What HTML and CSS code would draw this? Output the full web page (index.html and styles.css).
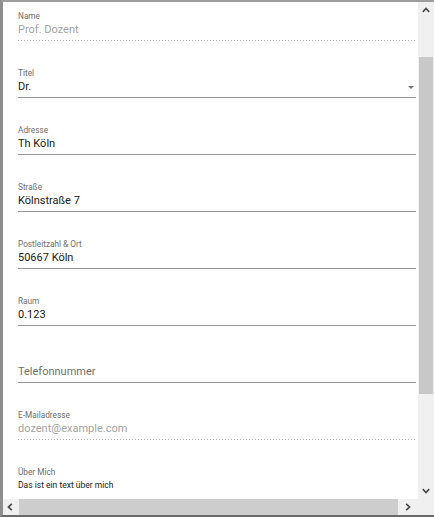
FILE: index.html
```html
<!DOCTYPE html>
<html lang="de">
<head>
<meta charset="utf-8">
<title>Dozent</title>
<link rel="stylesheet" href="styles.css">
</head>
<body>
<div class="frame">
  <div class="main">
    <div class="content">
      <div class="field first disabled">
        <div class="label">Name</div>
        <div class="value">Prof. Dozent</div>
        <div class="line"></div>
      </div>
      <div class="field">
        <div class="label">Titel</div>
        <div class="value-row">
          <div class="value">Dr.</div>
          <span class="caret"></span>
        </div>
        <div class="line"></div>
      </div>
      <div class="field">
        <div class="label">Adresse</div>
        <div class="value">Th Köln</div>
        <div class="line"></div>
      </div>
      <div class="field">
        <div class="label">Straße</div>
        <div class="value">Kölnstraße 7</div>
        <div class="line"></div>
      </div>
      <div class="field">
        <div class="label">Postleitzahl &amp; Ort</div>
        <div class="value">50667 Köln</div>
        <div class="line"></div>
      </div>
      <div class="field">
        <div class="label">Raum</div>
        <div class="value">0.123</div>
        <div class="line"></div>
      </div>
      <div class="field">
        <div class="label"></div>
        <div class="value placeholder">Telefonnummer</div>
        <div class="line"></div>
      </div>
      <div class="field disabled">
        <div class="label">E-Mailadresse</div>
        <div class="value">dozent@example.com</div>
        <div class="line"></div>
      </div>
      <div class="field area">
        <div class="label">Über Mich</div>
        <div class="text">Das ist ein text über mich</div>
      </div>
    </div>
    <div class="hbar">
      <div class="hbtn left">
        <svg width="6" height="8" viewBox="0 0 6 8"><path d="M4.8 0.8 L1.5 4 L4.8 7.2" fill="none" stroke="#4a4a4a" stroke-width="1.7"/></svg>
      </div>
      <div class="hthumb"></div>
      <div class="hbtn right">
        <svg width="6" height="8" viewBox="0 0 6 8"><path d="M1.2 0.8 L4.5 4 L1.2 7.2" fill="none" stroke="#4a4a4a" stroke-width="1.7"/></svg>
      </div>
    </div>
  </div>
  <div class="vbar">
    <div class="vbtn">
      <svg width="8" height="6" viewBox="0 0 8 6"><path d="M0.8 4.8 L4 1.5 L7.2 4.8" fill="none" stroke="#4a4a4a" stroke-width="1.7"/></svg>
    </div>
    <div class="vtrack"><div class="vthumb"></div></div>
    <div class="vbtn">
      <svg width="8" height="6" viewBox="0 0 8 6"><path d="M0.8 1.2 L4 4.5 L7.2 1.2" fill="none" stroke="#4a4a4a" stroke-width="1.7"/></svg>
    </div>
    <div class="corner"></div>
  </div>
</div>
</body>
</html>
```
FILE: styles.css
```css
html, body {
  margin: 0;
  padding: 0;
  background: #ffffff;
}
body {
  width: 434px;
  height: 517px;
  overflow: hidden;
  font-family: Roboto, "Noto Sans", Arial, sans-serif;
}
.frame {
  display: flex;
  height: 517px;
  box-sizing: border-box;
  border-top: 2px solid #9d9d9d;
  border-left: 3px solid #8e8e8e;
  border-bottom: 2px solid #6a6a6a;
  background: #ffffff;
}
.main {
  width: 415px;
  display: flex;
  flex-direction: column;
}
.content {
  height: 497px;
  overflow: hidden;
  padding: 0 2px 0 15px;
}
.field {
  padding-top: 27px;
}
.field.first {
  padding-top: 9px;
}
.label {
  height: 10px;
  font-size: 8.25px;
  line-height: 10px;
  color: #6e6e6e;
  margin-bottom: 2px;
  white-space: nowrap;
}
.value {
  font-size: 11px;
  line-height: 14px;
  height: 14px;
  color: #202020;
  padding-bottom: 3px;
  white-space: nowrap;
}
.value-row {
  display: flex;
  align-items: flex-start;
}
.value-row .value {
  flex: 1;
}
.caret {
  width: 0;
  height: 0;
  margin: 6px 2px 0 0;
  border-left: 3px solid transparent;
  border-right: 3px solid transparent;
  border-top: 3px solid #757575;
}
.value.placeholder {
  color: #6f6f6f;
}
.line {
  height: 1px;
  background: #949494;
}
.disabled .value {
  color: #a3a3a3;
}
.disabled .line {
  background: transparent;
  background-image: linear-gradient(to right, rgba(0, 0, 0, 0.3) 0%, rgba(0, 0, 0, 0.3) 50%, transparent 0%);
  background-size: 3px 1px;
  background-repeat: repeat-x;
}
.area .text {
  font-size: 8.5px;
  line-height: 12px;
  color: #1a1a1a;
  margin-top: 1px;
}
.hbar {
  height: 16px;
  display: flex;
  background: #f0f0f0;
}
.hbtn {
  display: flex;
  align-items: center;
  justify-content: center;
}
.hbtn.left {
  width: 16px;
  padding-right: 3px;
  box-sizing: border-box;
}
.hthumb {
  width: 379px;
  background: #cdcdcd;
}
.hbtn.right {
  width: 20px;
}
.vbar {
  width: 16px;
  display: flex;
  flex-direction: column;
  background: #f0f0f0;
}
.vbtn {
  height: 16px;
  display: flex;
  align-items: center;
  justify-content: center;
}
.vtrack {
  flex: 1;
  padding-top: 39px;
  box-sizing: border-box;
}
.vthumb {
  height: 337px;
  margin: 0 1px 0 1px;
  background: #c8c8c8;
}
.corner {
  height: 16px;
}
```
